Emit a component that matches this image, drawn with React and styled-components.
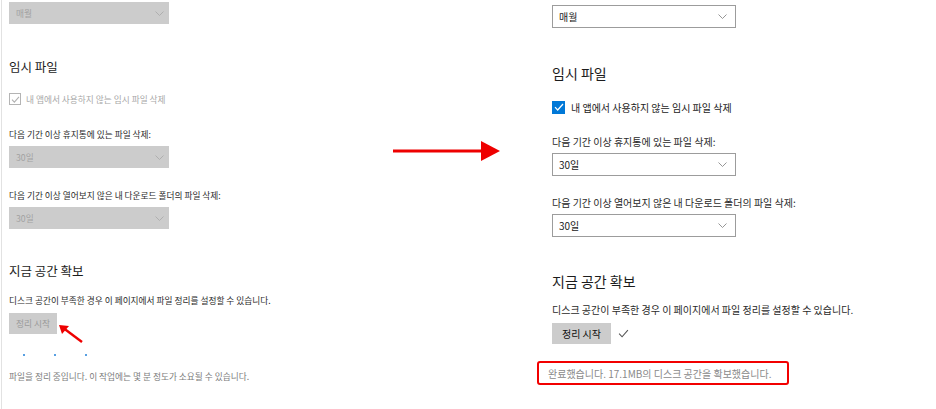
import React from 'react';
import styled, { createGlobalStyle } from 'styled-components';

const GlobalStyle = createGlobalStyle`
  html, body {
    margin: 0;
    padding: 0;
    background: #ffffff;
  }
  body {
    font-family: "Noto Sans CJK KR", "Noto Sans", sans-serif;
    color: #222;
  }
`;

const Page = styled.div`
  display: flex;
  width: 936px;
  height: 409px;
  overflow: hidden;
`;

const Panel = styled.section`
  position: relative;
  display: flex;
  flex-direction: column;
  align-items: flex-start;
  box-sizing: border-box;
  flex: none;
  width: ${p => (p.$compact ? '329px' : '400px')};
  margin-left: ${p => (p.$compact ? '1px' : '0')};
  padding: ${p => (p.$compact ? '2px 0 0 7px' : '5px 0 0 15px')};
  border-left: ${p => (p.$compact ? '1px solid #e2e2e2' : 'none')};
`;

const ArrowColumn = styled.div`
  flex: none;
  width: 207px;
  padding: 141px 0 0 63px;
  box-sizing: border-box;
`;

const Select = styled.div`
  display: flex;
  align-items: center;
  justify-content: space-between;
  box-sizing: border-box;
  width: ${p => (p.$compact ? 160 : 184)}px;
  height: ${p => (p.$compact ? 22 : 23)}px;
  margin-top: ${p => p.$gap || 0}px;
  padding: ${p => (p.$compact ? '0 5px 0 7px' : '0 8px 0 6px')};
  background: ${p => (p.$compact ? '#cccccc' : '#ffffff')};
  border: ${p => (p.$compact ? 'none' : '1.5px solid #9c9c9c')};
  color: ${p => (p.$compact ? '#a2a2a2' : '#222')};
  font-size: ${p => (p.$compact ? 8.7 : 10)}px;
`;

const Heading = styled.h2`
  margin: ${p => p.$gap}px 0 0;
  font-size: ${p => (p.$compact ? 12.5 : 14)}px;
  line-height: 20px;
  font-weight: 400;
  color: #1c1c1c;
`;

const CheckRow = styled.label`
  display: flex;
  align-items: center;
  gap: ${p => (p.$compact ? 5 : 6)}px;
  margin-top: ${p => p.$gap}px;
  height: 14px;
  font-size: ${p => (p.$compact ? 8.7 : 10)}px;
  color: ${p => (p.$compact ? '#a8a8a8' : '#222')};
`;

const Box = styled.span`
  display: flex;
  align-items: center;
  justify-content: center;
  box-sizing: border-box;
  width: ${p => (p.$compact ? 12 : 13)}px;
  height: ${p => (p.$compact ? 12 : 13)}px;
  background: ${p => (p.$compact ? '#ffffff' : '#0078d7')};
  border: ${p => (p.$compact ? '1.5px solid #b4b4b4' : 'none')};
`;

const Text = styled.p`
  margin: ${p => p.$gap}px 0 0;
  font-size: ${p => (p.$compact ? 8.7 : 10)}px;
  line-height: 14px;
  color: ${p => p.$color || '#2a2a2a'};
  white-space: nowrap;
`;

const ActionRow = styled.div`
  display: flex;
  align-items: center;
  gap: 7px;
  margin-top: ${p => p.$gap}px;
`;

const Button = styled.button`
  box-sizing: border-box;
  width: ${p => (p.$compact ? 48 : 59)}px;
  height: 21px;
  padding: 0;
  border: none;
  background: #cccccc;
  color: ${p => (p.$compact ? '#9a9a9a' : '#111')};
  font-family: inherit;
  font-size: ${p => (p.$compact ? 8.7 : 10)}px;
`;

const Dots = styled.div`
  display: flex;
  gap: 29px;
  margin: 20px 0 0 14px;
`;

const Dot = styled.span`
  width: 2px;
  height: 2px;
  border-radius: 50%;
  background: #1f7fd8;
`;

const Status = styled.div`
  box-sizing: border-box;
  display: flex;
  align-items: center;
  margin: ${p => p.$gap}px 0 0 -15px;
  width: 252px;
  height: 24px;
  padding-left: 9px;
  border: 2px solid #f20000;
  border-radius: 3px;
  font-size: 10px;
  color: #8a8a8a;
  white-space: nowrap;
`;

const Annotation = styled.svg`
  position: absolute;
  left: 52px;
  top: 320px;
  overflow: visible;
`;

const Chevron = ({ color }) => (
  <svg width="9" height="5" viewBox="0 0 9 5">
    <polyline points="0.5,0.5 4.5,4.5 8.5,0.5" fill="none" stroke={color} strokeWidth="0.9" />
  </svg>
);

const Tick = ({ color, width = 10, height = 8, sw = 1.2 }) => (
  <svg width={width} height={height} viewBox="0 0 10 8">
    <polyline points="1,4.2 3.7,7 9,1" fill="none" stroke={color} strokeWidth={sw} />
  </svg>
);

const CleanupSettings = ({ running }) => {
  const c = running;
  const g = c
    ? { h1: 33, chk: 15, l1: 22, s: 4, l2: 21, h2: 32, d: 13, btn: 5 }
    : { h1: 35, chk: 17, l1: 21, s: 4, l2: 20, h2: 34, d: 12, btn: 6 };
  const chevron = c ? '#ababab' : '#8a8a8a';

  return (
    <Panel $compact={c}>
      <Select $compact={c}>
        매월
        <Chevron color={chevron} />
      </Select>

      <Heading $compact={c} $gap={g.h1}>임시 파일</Heading>
      <CheckRow $compact={c} $gap={g.chk}>
        <Box $compact={c}>
          <Tick color={c ? '#b0b0b0' : '#ffffff'} width={c ? 9 : 10} height={c ? 7 : 8} />
        </Box>
        내 앱에서 사용하지 않는 임시 파일 삭제
      </CheckRow>

      <Text $compact={c} $gap={g.l1}>다음 기간 이상 휴지통에 있는 파일 삭제:</Text>
      <Select $compact={c} $gap={g.s}>
        30일
        <Chevron color={chevron} />
      </Select>

      <Text $compact={c} $gap={g.l2}>다음 기간 이상 열어보지 않은 내 다운로드 폴더의 파일 삭제:</Text>
      <Select $compact={c} $gap={g.s}>
        30일
        <Chevron color={chevron} />
      </Select>

      <Heading $compact={c} $gap={g.h2}>지금 공간 확보</Heading>
      <Text $compact={c} $gap={g.d}>디스크 공간이 부족한 경우 이 페이지에서 파일 정리를 설정할 수 있습니다.</Text>
      <ActionRow $gap={g.btn}>
        <Button $compact={c}>정리 시작</Button>
        {!c && <Tick color="#555" width={11} height={9} sw={1} />}
      </ActionRow>

      {c ? (
        <>
          <Dots>
            <Dot />
            <Dot />
            <Dot />
          </Dots>
          <Text $compact $gap={14} $color="#7c7c7c">
            파일을 정리 중입니다. 이 작업에는 몇 분 정도가 소요될 수 있습니다.
          </Text>
          {/* red pointer drawn on the screenshot */}
          <Annotation width="32" height="26" viewBox="0 0 32 26">
            <line x1="28" y1="22" x2="8" y2="7" stroke="#ee0000" strokeWidth="2.4" />
            <polygon points="5,5 15,6 8,14" fill="#ee0000" />
          </Annotation>
        </>
      ) : (
        <Status $gap={17}>완료했습니다. 17.1MB의 디스크 공간을 확보했습니다.</Status>
      )}
    </Panel>
  );
};

const BigArrow = () => (
  <svg width="108" height="20" viewBox="0 0 108 20">
    <rect x="0" y="8.5" width="90" height="3" fill="#ee0000" />
    <polygon points="88,0 107,10 88,20" fill="#ee0000" />
  </svg>
);

export default function App() {
  return (
    <>
      <GlobalStyle />
      <Page>
        <CleanupSettings running />
        <ArrowColumn>
          <BigArrow />
        </ArrowColumn>
        <CleanupSettings />
      </Page>
    </>
  );
}
